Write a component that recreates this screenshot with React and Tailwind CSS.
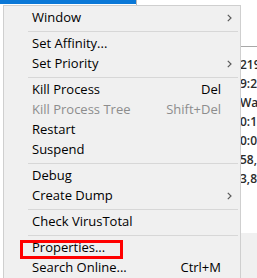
import { Fragment } from "react";

const menu = [
  { label: "Window", sub: true },
  { sep: true },
  { label: "Set Affinity..." },
  { label: "Set Priority", sub: true },
  { sep: true },
  { label: "Kill Process", key: "Del" },
  { label: "Kill Process Tree", key: "Shift+Del", disabled: true },
  { label: "Restart" },
  { label: "Suspend" },
  { sep: true },
  { label: "Debug" },
  { label: "Create Dump", sub: true },
  { sep: true },
  { label: "Check VirusTotal" },
  { sep: true },
  { label: "Properties..." },
  { label: "Search Online...", key: "Ctrl+M" }
];

const stripColors = [
  ["bg-[#3b7fd9]", "h-[4px]"],
  ["bg-[#9a4cf0]", "h-[10px]"],
  ["bg-[#d4d2f6]", "h-[44px]"],
  ["bg-[#23c9c9]", "h-[16px]"],
  ["bg-[#d4d2f6]", "h-[10px]"],
  ["bg-[#9a4cf0]", "h-[20px]"],
  ["bg-[#f4c6cc]", "h-[16px]"],
  ["bg-[#d4d2f6]", "h-[130px]"],
  ["bg-[#f4c6cc]", "h-[28px]"]
];

const cells = ["219", "9:2", "Wa", "0:1", "0:0", "58,", "3,8"];

function Chevron() {
  return (
    <svg width="5" height="8" viewBox="0 0 5 8" className="ml-[6px]">
      <path d="M0.8 0.8 L4 4 L0.8 7.2" fill="none" stroke="#5a5a5a" strokeWidth="1.2" />
    </svg>
  );
}

export default function App() {
  return (
    <div
      className="relative w-[257px] h-[278px] overflow-hidden bg-white flex"
      style={{ fontFamily: '"Open Sans", "Noto Sans", sans-serif' }}
    >
      {/* process list behind the menu */}
      <div className="w-[3px] flex flex-col">
        {stripColors.map(([c, h], i) => (
          <div key={i} className={`${c} ${h}`} />
        ))}
      </div>
      <div className="flex-1 flex flex-col">
        <div className="flex h-[5px]">
          <div className="w-[136px] h-[4px] bg-[#0a78d7]" />
          <div className="w-px h-[5px] bg-[#b8b8b8]" />
          <div className="h-[5px] overflow-hidden pl-[15px]">
            <div className="-mt-[11px] text-[12px] leading-[14px] text-[#333]">30010</div>
          </div>
        </div>
        <div className="flex flex-1">
          <div className="w-[238px]" />
          <div className="flex-1 flex flex-col">
            <div className="h-[41px]" />
            <div className="h-px bg-[#a8a8a8]" />
            <div className="flex flex-col pt-[8px] pl-[2px] text-[12px] leading-[19px] font-semibold text-[#2b2b2b]">
              {cells.map((c) => (
                <div key={c} className="whitespace-nowrap">{c}</div>
              ))}
            </div>
            <div className="flex-1" />
            <div className="h-[45px] bg-[#f0f0f0]" />
          </div>
        </div>
      </div>

      {/* context menu */}
      <div className="absolute left-[3px] top-[5px] w-[238px] h-[290px] bg-[#f0f0f0] border border-[#cfcfcf] pt-[2px] text-[13px] text-black">
        {menu.map((m, i) =>
          m.sep ? (
            <div key={i} className="h-[6px] flex items-center pl-[24px] pr-[2px]">
              <div className="h-px w-full bg-[#d7d7d7]" />
            </div>
          ) : (
            <div
              key={i}
              className={`h-[20px] flex items-center pl-[28px] ${m.disabled ? "text-[#8d8d8d]" : ""}`}
            >
              <span className="flex-1 whitespace-nowrap">{m.label}</span>
              {m.key && <span className="whitespace-nowrap">{m.key}</span>}
              <span className="w-[19px] flex items-center">{m.sub && <Chevron />}</span>
            </div>
          )
        )}
      </div>

      {/* highlight around Properties... */}
      <div className="absolute left-[20px] top-[240px] w-[103px] h-[19px] border-[3px] border-[#ff0000]" />
    </div>
  );
}
